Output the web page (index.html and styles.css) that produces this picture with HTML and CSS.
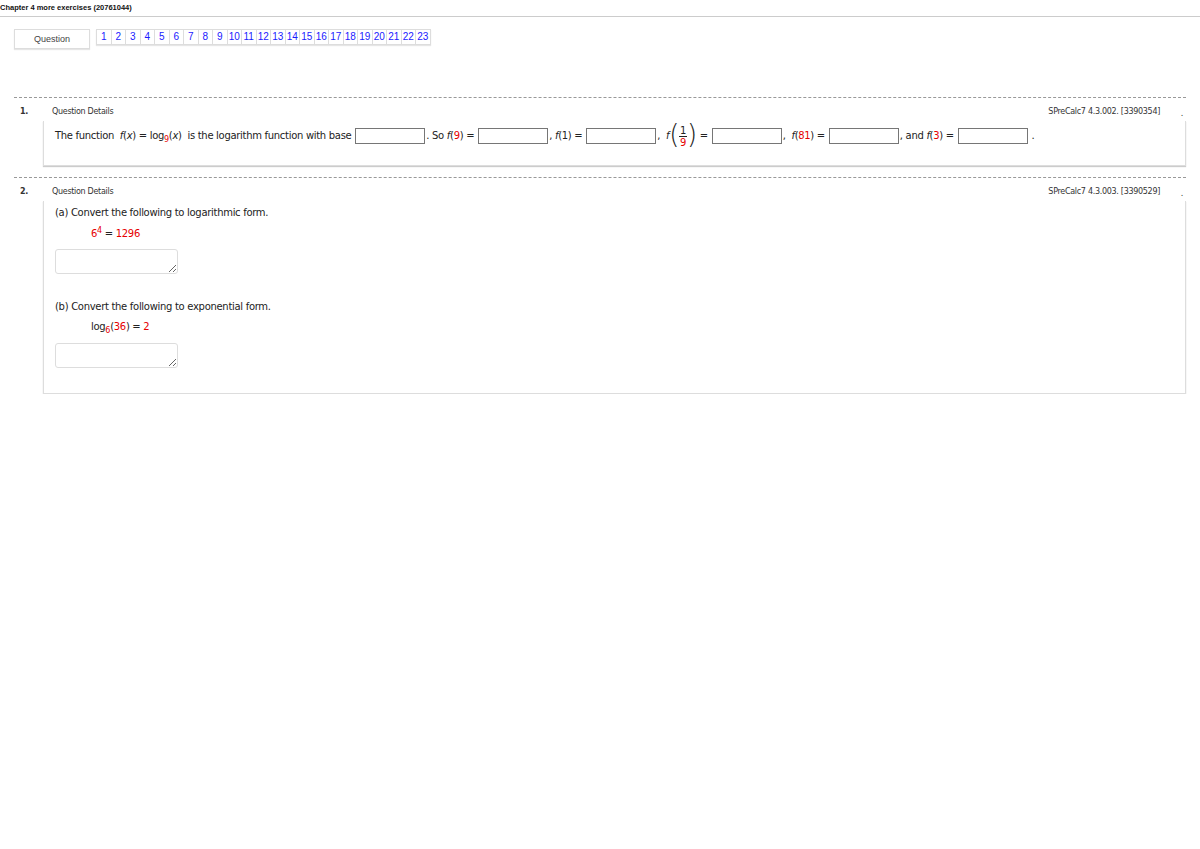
FILE: index.html
```html
<!DOCTYPE html>
<html lang="en">
<head>
    <meta charset="UTF-8">
    <title>Chapter 4 more exercises</title>
    <link rel="stylesheet" href="styles.css">
</head>
<body>

<div class="page-title">Chapter 4 more exercises (20761044)</div>

<div class="nav">
    <div class="nav-label">Question</div>
    <div class="nav-links">
        <a>1</a><a>2</a><a>3</a><a>4</a><a>5</a><a>6</a><a>7</a><a>8</a><a>9</a><a>10</a><a>11</a><a>12</a>
        <a>13</a><a>14</a><a>15</a><a>16</a><a>17</a><a>18</a><a>19</a><a>20</a><a>21</a><a>22</a><a>23</a>
    </div>
</div>

<div class="question">
    <div class="q-head">
        <span class="q-num">1.</span>
        <span class="q-details">Question Details</span>
        <span class="q-ref">SPreCalc7 4.3.002. [3390354]</span>
        <span class="q-dot">.</span>
    </div>
    <div class="q-box q-box-inline">
        The function&nbsp; <i>f</i>(<i>x</i>) = log<sub class="red">9</sub>(<i>x</i>)&nbsp; is the logarithm function with base
        <input class="answer" type="text">. So <i>f</i>(<span class="red">9</span>) =
        <input class="answer" type="text">, <i>f</i>(1) =
        <input class="answer" type="text">, &nbsp;<i>f</i><span class="paren">(</span><span class="frac"><span class="frac-top">1</span><span class="red">9</span></span><span class="paren">)</span> =
        <input class="answer" type="text">, &nbsp;<i>f</i>(<span class="red">81</span>) =
        <input class="answer" type="text">, and <i>f</i>(<span class="red">3</span>) =
        <input class="answer" type="text"> .
    </div>
</div>

<div class="question">
    <div class="q-head">
        <span class="q-num">2.</span>
        <span class="q-details">Question Details</span>
        <span class="q-ref">SPreCalc7 4.3.003. [3390529]</span>
        <span class="q-dot">.</span>
    </div>
    <div class="q-box">
        <div class="part">(a) Convert the following to logarithmic form.</div>
        <div class="math"><span class="red">6<sup>4</sup></span> = <span class="red">1296</span></div>
        <textarea class="work"></textarea>
        <div class="part part-b">(b) Convert the following to exponential form.</div>
        <div class="math math-b">log<sub class="red">6</sub>(<span class="red">36</span>) = <span class="red">2</span></div>
        <textarea class="work"></textarea>
    </div>
</div>

</body>
</html>
```

FILE: styles.css
```css
body {
    margin: 0;
    font-family: Verdana, "DejaVu Sans", sans-serif;
    color: #222;
    background: #fff;
}
.page-title {
    font: bold 7.5px "Liberation Sans", Arial, sans-serif;
    color: #111;
    padding: 3px 0 4px;
    line-height: 9px;
    border-bottom: 1px solid #ccc;
}
.nav {
    display: flex;
    align-items: flex-start;
    gap: 6px;
    margin-top: 12px;
    padding-left: 14px;
    font-family: "Liberation Sans", Arial, sans-serif;
}
.nav-label {
    width: 74px;
    height: 18px;
    line-height: 18px;
    border: 1px solid #ddd;
    box-shadow: 0 1px 1px #e6e6e6;
    text-align: center;
    font-size: 9px;
    color: #444;
}
.nav-links {
    display: flex;
    border-left: 1px solid #ddd;
    box-shadow: 0 1px 1px #e6e6e6;
}
.nav-links a {
    width: 13.5px;
    height: 14px;
    line-height: 14px;
    border: 1px solid #ddd;
    border-left: none;
    text-align: center;
    font-size: 10px;
    color: #1a1aff;
}
.question {
    margin: 48px 14px 0;
    border-top: 1px dashed #999;
}
.question + .question {
    margin-top: 11px;
}
.q-head {
    display: flex;
    align-items: center;
    height: 20px;
    padding-top: 3px;
    font-size: 8px;
    letter-spacing: -0.3px;
    color: #333;
}
.q-num {
    width: 32px;
    padding-left: 6px;
    font-weight: bold;
}
.q-details {
    flex: 1;
}
.q-ref {
    margin-right: 4px;
}
.q-dot {
    width: 22px;
    text-align: right;
    padding-top: 4px;
    padding-right: 3px;
    box-sizing: border-box;
}
.q-box {
    margin-left: 29px;
    padding: 4px 11px 25px;
    border: 1px solid #ddd;
    border-top: none;
    box-shadow: 0 1px 1px #ccc;
    font-size: 10px;
    letter-spacing: -0.3px;
    line-height: 16px;
}
.q-box-inline {
    padding-top: 2px;
    padding-bottom: 16px;
    line-height: 26px;
}
.red {
    color: #e60000;
}
sub, sup {
    font-size: 8px;
    line-height: 0;
}
.answer {
    width: 66px;
    height: 12px;
    margin: 0 1px;
    padding: 1px;
    border: 1px solid #767676;
    vertical-align: middle;
}
.paren {
    font-size: 26px;
    font-weight: 100;
    vertical-align: middle;
    position: relative;
    top: -2px;
}
.frac {
    display: inline-flex;
    flex-direction: column;
    align-items: center;
    vertical-align: middle;
    line-height: 11px;
    font-size: 10px;
}
.frac-top {
    border-bottom: 1px solid #222;
    padding: 0 1px;
}
.math {
    margin-top: 5px;
    padding-left: 36px;
}
.math-b {
    margin-top: 4px;
}
.work {
    display: block;
    width: 119px;
    height: 21px;
    margin-top: 7px;
    padding: 1px;
    border: 1px solid #ddd;
    border-radius: 3px;
}
.part-b {
    margin-top: 25px;
}
.math-b + .work {
    margin-top: 8px;
}
```
